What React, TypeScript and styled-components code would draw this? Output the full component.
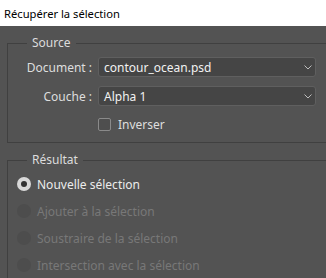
import React from "react";
import styled, { createGlobalStyle } from "styled-components";

const Global = createGlobalStyle`
  html, body { margin: 0; padding: 0; }
  body { width: 326px; height: 278px; overflow: hidden; background: #535353; }
  * { box-sizing: border-box; }
`;

const Window = styled.div`
  width: 326px;
  height: 278px;
  overflow: hidden;
  display: flex;
  flex-direction: column;
  font-family: "Segoe UI", "Noto Sans", "Open Sans", sans-serif;
  font-size: 12px;
`;

const TitleBar = styled.div`
  height: 26px;
  flex: none;
  background: #ffffff;
  color: #000;
  padding: 1px 0 0 4px;
  display: flex;
  align-items: center;
  font-size: 11.2px;
`;

const Body = styled.div`
  flex: 1;
  background: #535353;
  padding: 9px 0 0 7px;
  display: flex;
  flex-direction: column;
  gap: 9px;
`;

const Group = styled.fieldset<{ $h?: number }>`
  margin: 0 -20px 0 0;
  padding: 0;
  border: 1px solid #404040;
  height: ${(p) => (p.$h ? `${p.$h}px` : "auto")};
  min-width: 0;
`;

const Legend = styled.legend`
  margin-left: 19px;
  padding: 0 5px;
  color: #dcdcdc;
  font-size: 12px;
  line-height: 16px;
`;

const SourceContent = styled.div`
  display: grid;
  grid-template-columns: 84px 218px;
  column-gap: 6px;
  row-gap: 9px;
  padding: 6px 0 0 0;
  align-items: center;
`;

const Label = styled.div`
  text-align: right;
  color: #dedede;
  font-size: 12px;
`;

const Select = styled.div`
  height: 20px;
  background: #454545;
  border: 1px solid #5f5f5f;
  border-radius: 3px;
  color: #f2f2f2;
  display: flex;
  align-items: center;
  justify-content: space-between;
  padding: 0 3px 0 5px;
  font-size: 12px;
`;

const CheckRow = styled.label`
  grid-column: 2;
  display: flex;
  align-items: center;
  gap: 7px;
  color: #dedede;
  margin-top: 1px;
`;

const Box = styled.span`
  width: 13px;
  height: 13px;
  border: 1px solid #8a8a8a;
  border-radius: 2px;
  background: #4e4e4e;
  display: inline-block;
`;

const Options = styled.div`
  display: flex;
  flex-direction: column;
  gap: 11px;
  padding: 8px 0 0 9px;
`;

const RadioRow = styled.div<{ $disabled?: boolean }>`
  display: flex;
  align-items: center;
  gap: 6px;
  height: 16px;
  color: ${(p) => (p.$disabled ? "#787878" : "#ececec")};
  font-size: 12px;
`;

const RadioDot = styled.span<{ $checked?: boolean; $disabled?: boolean }>`
  width: 14px;
  height: 14px;
  border-radius: 50%;
  flex: none;
  background: ${(p) => (p.$disabled ? "#4d4d4d" : "#d9d9d9")};
  display: flex;
  align-items: center;
  justify-content: center;
  &::after {
    content: "";
    width: 6px;
    height: 6px;
    border-radius: 50%;
    background: ${(p) => (p.$checked ? "#333" : "transparent")};
  }
`;

const Chevron = () => (
  <svg width="8" height="5" viewBox="0 0 8 5">
    <path d="M0.5 0.5 L4 4 L7.5 0.5" fill="none" stroke="#bdbdbd" strokeWidth="1" />
  </svg>
);

export default function App() {
  return (
    <Window>
      <Global />
      <TitleBar>Récupérer la sélection</TitleBar>
      <Body>
        <Group $h={108}>
          <Legend>Source</Legend>
          <SourceContent>
            <Label>Document :</Label>
            <Select>
              <span>contour_ocean.psd</span>
              <Chevron />
            </Select>
            <Label>Couche :</Label>
            <Select>
              <span>Alpha 1</span>
              <Chevron />
            </Select>
            <CheckRow>
              <Box />
              Inverser
            </CheckRow>
          </SourceContent>
        </Group>
        <Group $h={140}>
          <Legend>Résultat</Legend>
          <Options>
            <RadioRow>
              <RadioDot $checked />
              Nouvelle sélection
            </RadioRow>
            <RadioRow $disabled>
              <RadioDot $disabled />
              Ajouter à la sélection
            </RadioRow>
            <RadioRow $disabled>
              <RadioDot $disabled />
              Soustraire de la sélection
            </RadioRow>
            <RadioRow $disabled>
              <RadioDot $disabled />
              Intersection avec la sélection
            </RadioRow>
          </Options>
        </Group>
      </Body>
    </Window>
  );
}
